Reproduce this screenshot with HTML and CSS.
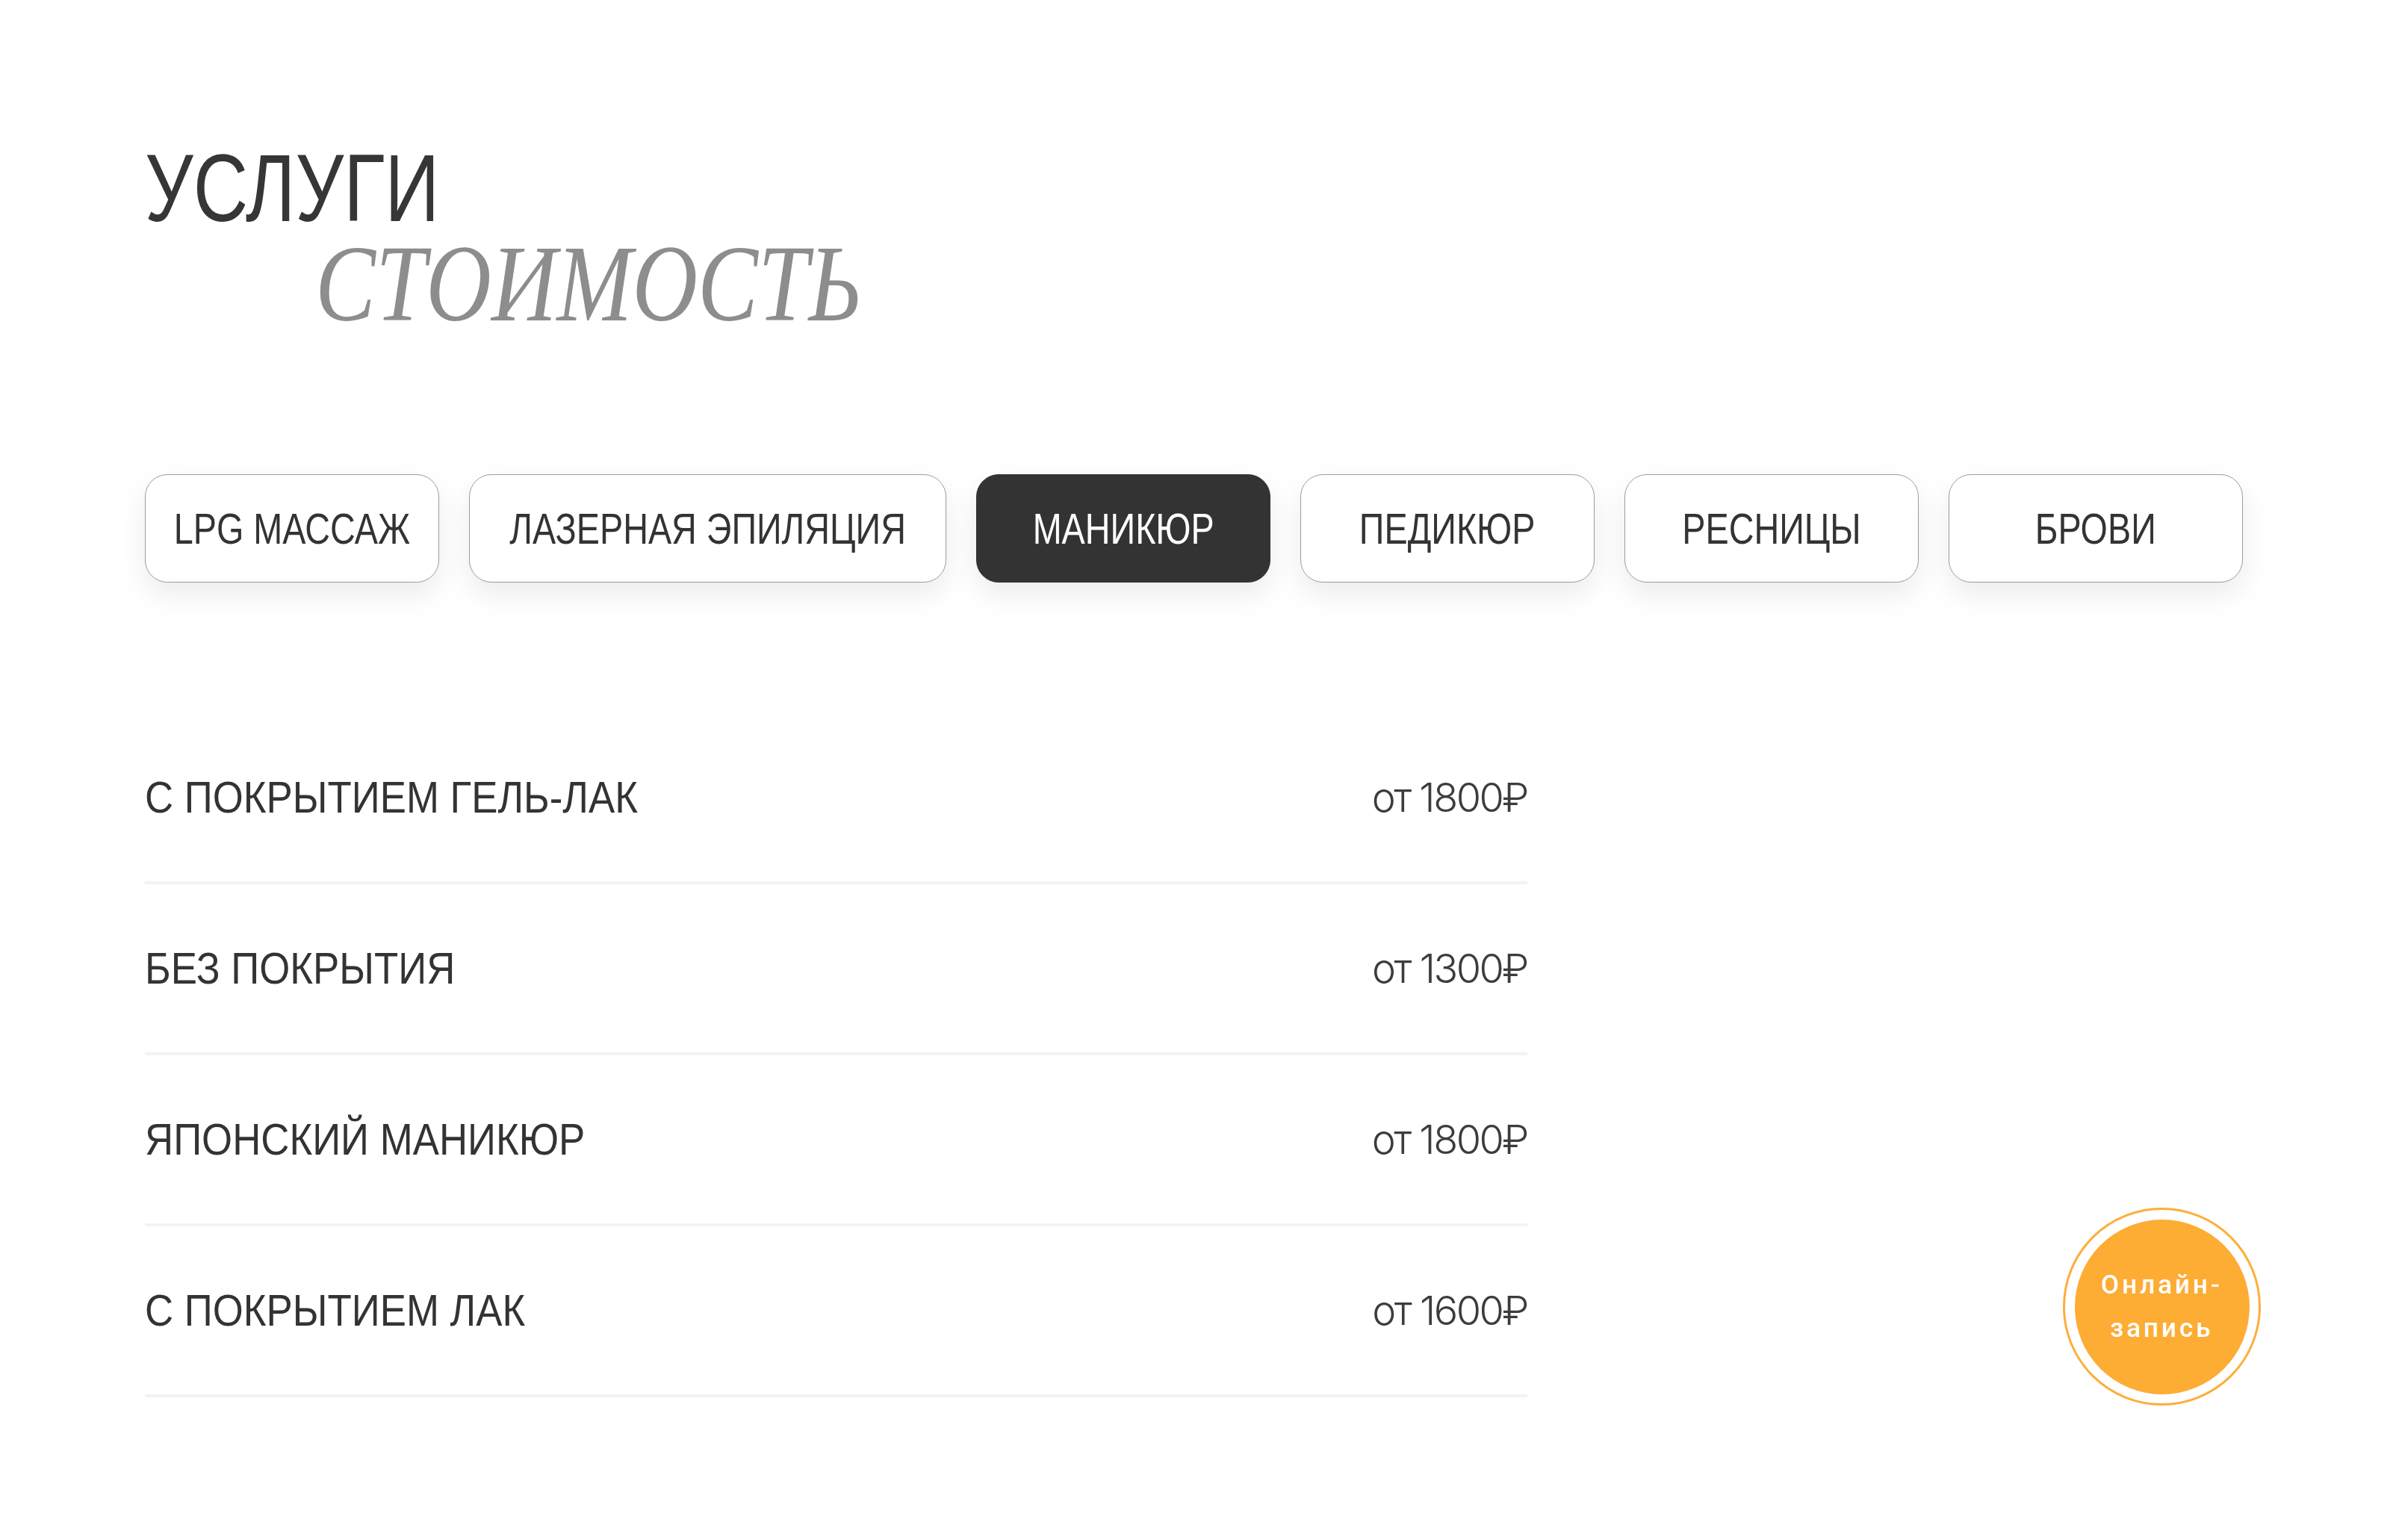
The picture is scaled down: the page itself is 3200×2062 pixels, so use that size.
FILE: index.html
```html
<!DOCTYPE html>
<html lang="ru">
<head>
<meta charset="utf-8">
<title>Услуги — стоимость</title>
<link rel="stylesheet" href="styles.css">
</head>
<body>
<main class="page">
  <header class="heading">
    <h1 class="title"><span class="cond">УСЛУГИ</span></h1>
    <h2 class="subtitle"><span class="serif-cond">СТОИМОСТЬ</span></h2>
  </header>

  <nav class="tabs">
    <button class="tab"><span class="tab-label">LPG МАССАЖ</span></button>
    <button class="tab tab-wide"><span class="tab-label">ЛАЗЕРНАЯ ЭПИЛЯЦИЯ</span></button>
    <button class="tab tab-active"><span class="tab-label">МАНИКЮР</span></button>
    <button class="tab"><span class="tab-label">ПЕДИКЮР</span></button>
    <button class="tab"><span class="tab-label">РЕСНИЦЫ</span></button>
    <button class="tab"><span class="tab-label">БРОВИ</span></button>
  </nav>

  <ul class="prices">
    <li class="price-row"><span class="item-name">С ПОКРЫТИЕМ ГЕЛЬ-ЛАК</span><span class="item-price">от 1800₽</span></li>
    <li class="price-row"><span class="item-name">БЕЗ ПОКРЫТИЯ</span><span class="item-price">от 1300₽</span></li>
    <li class="price-row"><span class="item-name">ЯПОНСКИЙ МАНИКЮР</span><span class="item-price">от 1800₽</span></li>
    <li class="price-row"><span class="item-name">С ПОКРЫТИЕМ ЛАК</span><span class="item-price">от 1600₽</span></li>
  </ul>
</main>

<a class="online-btn" href="#"><span class="online-inner">Онлайн-<br>запись</span></a>
</body>
</html>
```

FILE: styles.css
```css
* { box-sizing: border-box; }

html, body {
  margin: 0;
  padding: 0;
  background: #ffffff;
}

body {
  font-family: "Liberation Sans", Arial, sans-serif;
  color: #333333;
  min-height: 2062px;
  position: relative;
}

.page {
  padding: 188px 194px 0 194px;
}

.heading {
  display: flex;
  flex-direction: column;
}

.title {
  margin: 0;
  font-weight: 400;
  font-size: 128px;
  line-height: 128px;
  color: #363636;
}

.cond {
  display: inline-block;
  transform: scaleX(0.795);
  transform-origin: left center;
  white-space: nowrap;
}

.subtitle {
  margin: 0 0 0 228px;
  font-family: "Liberation Serif", "Times New Roman", serif;
  font-style: italic;
  font-weight: 400;
  font-size: 147px;
  line-height: 127px;
  color: #8d8d8d;
}

.serif-cond {
  display: inline-block;
  transform: scaleX(0.825);
  transform-origin: left center;
  white-space: nowrap;
}

.tabs {
  display: flex;
  gap: 40px;
  margin-top: 192px;
}

.tab {
  width: 394px;
  height: 145px;
  flex: none;
  display: flex;
  align-items: center;
  justify-content: center;
  background: #ffffff;
  border: 1.5px solid #9c9c9c;
  border-radius: 30px;
  box-shadow: 0 16px 38px rgba(0, 0, 0, 0.08);
  font-family: "Liberation Sans", Arial, sans-serif;
  font-size: 57px;
  color: #333333;
  padding: 0;
  cursor: pointer;
}

.tab-wide { width: 639px; }

.tab-active {
  background: #333333;
  border-color: #333333;
  color: #ffffff;
}

.tab-label {
  display: inline-block;
  transform: scaleX(0.82);
  transform-origin: center center;
  white-space: nowrap;
}

.prices {
  list-style: none;
  margin: 175px 0 0 0;
  padding: 0;
  width: 1851px;
}

.price-row {
  height: 229px;
  display: flex;
  align-items: center;
  justify-content: space-between;
  border-bottom: 4px solid #f3f3f3;
}

.item-name {
  display: inline-block;
  font-size: 60px;
  color: #333333;
  transform: scaleX(0.88);
  transform-origin: left center;
  white-space: nowrap;
}

.item-price {
  font-family: Inter, "Noto Sans", sans-serif;
  font-weight: 300;
  font-size: 54px;
  letter-spacing: -2.5px;
  color: #3c3c3c;
  white-space: nowrap;
}

.online-btn {
  position: absolute;
  left: 2762px;
  top: 1617px;
  width: 265px;
  height: 265px;
  border-radius: 50%;
  border: 3px solid #fdae3a;
  display: flex;
  align-items: center;
  justify-content: center;
  text-decoration: none;
  background: #ffffff;
}

.online-inner {
  width: 234px;
  height: 234px;
  border-radius: 50%;
  background: #fdac34;
  color: #ffffff;
  display: flex;
  align-items: center;
  justify-content: center;
  text-align: center;
  font-family: Roboto, "DejaVu Sans", sans-serif;
  font-weight: 500;
  font-size: 35px;
  line-height: 58px;
  letter-spacing: 4px;
}
```
